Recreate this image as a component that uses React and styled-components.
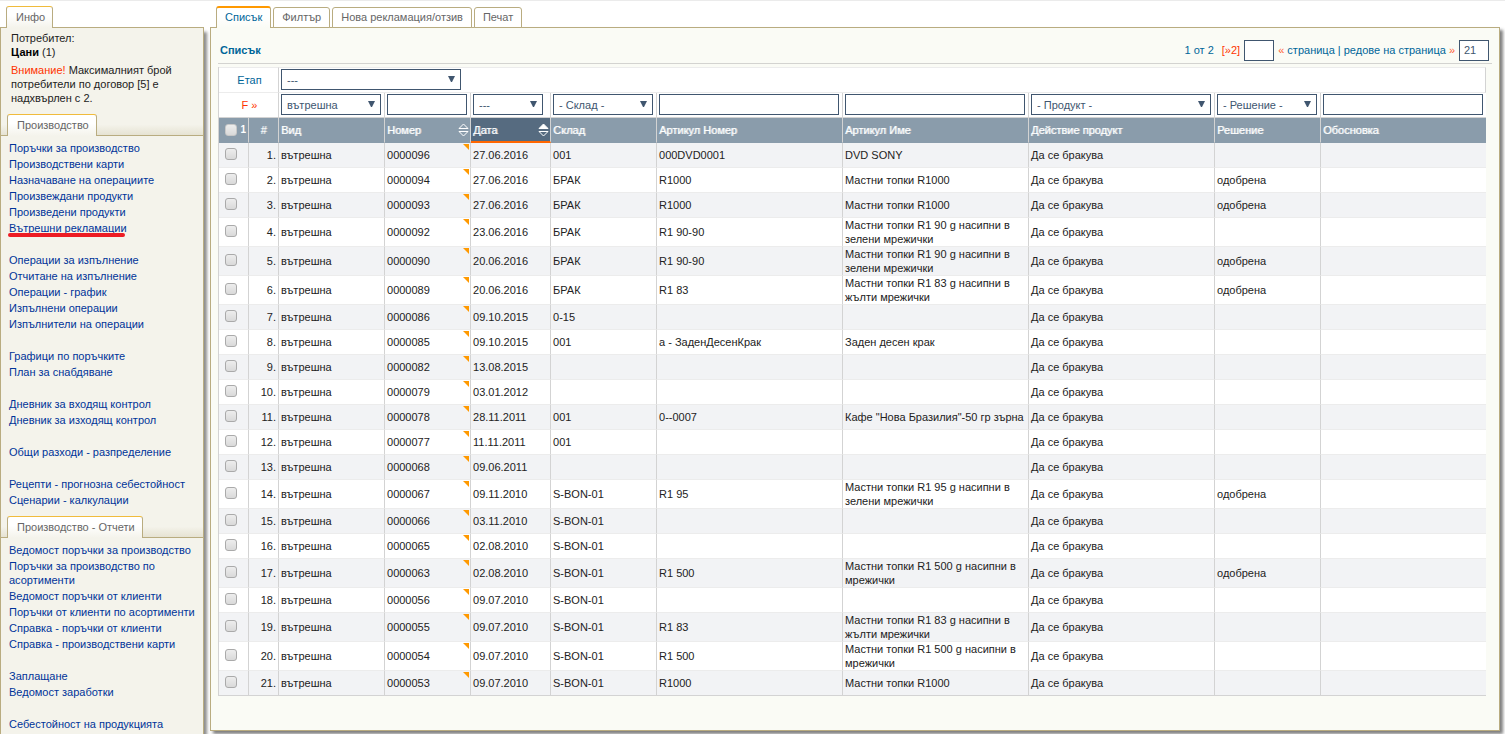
import styled, { createGlobalStyle, css } from "styled-components"

const menuProizvodstvo = [
    "Поръчки за производство",
    "Производствени карти",
    "Назначаване на операциите",
    "Произвеждани продукти",
    "Произведени продукти",
    "Вътрешни рекламации",
    "",
    "Операции за изпълнение",
    "Отчитане на изпълнение",
    "Операции - график",
    "Изпълнени операции",
    "Изпълнители на операции",
    "",
    "Графици по поръчките",
    "План за снабдяване",
    "",
    "Дневник за входящ контрол",
    "Дневник за изходящ контрол",
    "",
    "Общи разходи - разпределение",
    "",
    "Рецепти - прогнозна себестойност",
    "Сценарии - калкулации",
]

const menuOtcheti = [
    "Ведомост поръчки за производство",
    "Поръчки за производство по асортименти",
    "Ведомост поръчки от клиенти",
    "Поръчки от клиенти по асортименти",
    "Справка - поръчки от клиенти",
    "Справка - производствени карти",
    "",
    "Заплащане",
    "Ведомост заработки",
    "",
    "Себестойност на продукцията",
]

const tabs = ["Списък", "Филтър", "Нова рекламация/отзив", "Печат"]

// номер, дата, склад, артикул номер, артикул име, решение
const rows = [
    ["0000096", "27.06.2016", "001", "000DVD0001", "DVD SONY", ""],
    ["0000094", "27.06.2016", "БРАК", "R1000", "Мастни топки R1000", "одобрена"],
    ["0000093", "27.06.2016", "БРАК", "R1000", "Мастни топки R1000", "одобрена"],
    ["0000092", "23.06.2016", "БРАК", "R1 90-90", "Мастни топки R1 90 g насипни в зелени мрежички", ""],
    ["0000090", "20.06.2016", "БРАК", "R1 90-90", "Мастни топки R1 90 g насипни в зелени мрежички", "одобрена"],
    ["0000089", "20.06.2016", "БРАК", "R1 83", "Мастни топки R1 83 g насипни в жълти мрежички", "одобрена"],
    ["0000086", "09.10.2015", "0-15", "", "", ""],
    ["0000085", "09.10.2015", "001", "a - ЗаденДесенКрак", "Заден десен крак", ""],
    ["0000082", "13.08.2015", "", "", "", ""],
    ["0000079", "03.01.2012", "", "", "", ""],
    ["0000078", "28.11.2011", "001", "0--0007", "Кафе \"Нова Бразилия\"-50 гр зърна", ""],
    ["0000077", "11.11.2011", "001", "", "", ""],
    ["0000068", "09.06.2011", "", "", "", ""],
    ["0000067", "09.11.2010", "S-BON-01", "R1 95", "Мастни топки R1 95 g насипни в зелени мрежички", "одобрена"],
    ["0000066", "03.11.2010", "S-BON-01", "", "", ""],
    ["0000065", "02.08.2010", "S-BON-01", "", "", ""],
    ["0000063", "02.08.2010", "S-BON-01", "R1 500", "Мастни топки R1 500 g насипни в мрежички", "одобрена"],
    ["0000056", "09.07.2010", "S-BON-01", "", "", ""],
    ["0000055", "09.07.2010", "S-BON-01", "R1 83", "Мастни топки R1 83 g насипни в жълти мрежички", ""],
    ["0000054", "09.07.2010", "S-BON-01", "R1 500", "Мастни топки R1 500 g насипни в мрежички", ""],
    ["0000053", "09.07.2010", "S-BON-01", "R1000", "Мастни топки R1000", ""],
]

export default function App(){
    return (
        <>
            <GlobalStyle />
            <Page>
                <Sidebar />
                <Content />
            </Page>
        </>
    )
}

function Sidebar(){
    return (
        <StyleSidebar>
            <SideTabs $first><SideTab>Инфо</SideTab></SideTabs>
            <SideBody>
                <Info>
                    <p>Потребител:<br /><b>Цани</b> (1)</p>
                    <p><Warning>Внимание!</Warning> Максималният брой потребители по договор [5] е надхвърлен с 2.</p>
                </Info>
                <SideTabs><SideTab>Производство</SideTab></SideTabs>
                <Menu items={menuProizvodstvo} marked="Вътрешни рекламации" />
                <SideTabs><SideTab>Производство - Отчети</SideTab></SideTabs>
                <Menu items={menuOtcheti} />
            </SideBody>
        </StyleSidebar>
    )
}

function Menu({ items, marked }){
    return (
        <MenuList>
            {items.map((item, i) => (
                <li key={i}>
                    {item && <MenuLink href="#">{item}{item === marked && <RedLine />}</MenuLink>}
                </li>
            ))}
        </MenuList>
    )
}

function RedLine(){
    return (
        <StyleRedLine width="118" height="6" viewBox="0 0 118 6" aria-hidden="true">
            <path d="M2 3 H115" fill="none" stroke="#ed1c24" strokeWidth="4" strokeLinecap="round" />
        </StyleRedLine>
    )
}

function SelectBox({ label, value, width }){
    return (
        <StyleSelectBox $width={width}>
            <select aria-label={label} defaultValue={value}>
                <option>{value}</option>
            </select>
            <svg width="7" height="7" viewBox="0 0 7 7" aria-hidden="true"><path d="M0 0H7L4 6H3Z" fill="#40566f" /></svg>
        </StyleSelectBox>
    )
}

function SortIcon({ active }){
    return (
        <StyleSortIcon width="11" height="14" viewBox="0 0 11 14" aria-hidden="true">
            <path d="M1 5.5 L5.5 1 L10 5.5 Z" fill={active ? "#fff" : "none"} stroke="#fff" strokeWidth="1" />
            <path d="M1 8.5 L5.5 13 L10 8.5 Z" fill="none" stroke="#fff" strokeWidth="1" />
        </StyleSortIcon>
    )
}

function Content(){
    return (
        <StyleContent>
            <Tabs>
                {tabs.map((tab, i) => <Tab key={tab} type="button" $active={i === 0}>{tab}</Tab>)}
            </Tabs>
            <Panel>
                <TitleBar>
                    <h1>Списък</h1>
                    <Pager>
                        <span>1 от 2</span>
                        <PageLink href="#">[»2]</PageLink>
                        <TextInput $width={30} aria-label="страница" />
                        <label htmlFor="rowsPerPage"><i>«</i> страница | редове на страница <i>»</i></label>
                        <TextInput $width={30} id="rowsPerPage" defaultValue="21" />
                    </Pager>
                </TitleBar>
                <Grid />
            </Panel>
        </StyleContent>
    )
}

function Grid(){
    return (
        <Table>
            <colgroup>
                <Col $w={30} />
                <Col $w={30} />
                <Col $w={106} />
                <Col $w={86} />
                <Col $w={80} />
                <Col $w={106} />
                <Col $w={186} />
                <Col $w={186} />
                <Col $w={186} />
                <Col $w={106} />
                <col />
            </colgroup>
            <thead>
                <StageRow>
                    <td colSpan={2}>Етап</td>
                    <td colSpan={9}><SelectBox label="Етап" value="---" width={180} /></td>
                </StageRow>
                <FilterRow>
                    <td colSpan={2}><FilterLink href="#">F »</FilterLink></td>
                    <td><SelectBox label="Вид" value="вътрешна" width={100} /></td>
                    <td><TextInput $width={80} aria-label="Номер" /></td>
                    <td><SelectBox label="Дата" value="---" width={70} /></td>
                    <td><SelectBox label="Склад" value="- Склад -" width={100} /></td>
                    <td><TextInput $width={180} aria-label="Артикул Номер" /></td>
                    <td><TextInput $width={180} aria-label="Артикул Име" /></td>
                    <td><SelectBox label="Действие продукт" value="- Продукт -" width={180} /></td>
                    <td><SelectBox label="Решение" value="- Решение -" width={100} /></td>
                    <td><TextInput $width={160} aria-label="Обосновка" /></td>
                </FilterRow>
                <HeadRow>
                    <th><CheckAll><Check $head type="checkbox" aria-label="Всички" /><b>1</b></CheckAll></th>
                    <HeadNumber>#</HeadNumber>
                    <th>Вид</th>
                    <th><HeadLabel>Номер<SortIcon /></HeadLabel></th>
                    <SortedHead><HeadLabel>Дата<SortIcon active /></HeadLabel></SortedHead>
                    <th>Склад</th>
                    <th>Артикул Номер</th>
                    <th>Артикул Име</th>
                    <th>Действие продукт</th>
                    <th>Решение</th>
                    <th>Обосновка</th>
                </HeadRow>
            </thead>
            <tbody>
                {rows.map(([nomer, data, sklad, artikul, ime, reshenie], i) => (
                    <Row key={nomer}>
                        <CheckCell><Check type="checkbox" aria-label={`Избор ${nomer}`} /></CheckCell>
                        <NumberCell>{i + 1}.</NumberCell>
                        <td>вътрешна</td>
                        <MarkedCell>{nomer}</MarkedCell>
                        <td>{data}</td>
                        <td>{sklad}</td>
                        <td>{artikul}</td>
                        <td>{ime}</td>
                        <td>Да се бракува</td>
                        <td>{reshenie}</td>
                        <td></td>
                    </Row>
                ))}
            </tbody>
        </Table>
    )
}


const GlobalStyle = createGlobalStyle`
    * {
        box-sizing: border-box;
    }

    body {
        margin: 0;
        background: #fff;
        color: #222;
        font: 11px/14px "Liberation Sans", Arial, sans-serif;
    }

    a {
        text-decoration: none;
    }

    input, select, button {
        margin: 0;
        font: inherit;
    }
`

const Page = styled.div`
    display: flex;
    gap: 6px;
    min-height: 100vh;
    padding-right: 5px;
    border-top: 1px solid #ebebeb;
`

const StyleSidebar = styled.aside`
    display: flex;
    flex-direction: column;
    flex: 0 0 204px;
    padding-top: 5px;
`

const SideBody = styled.div`
    flex: 1;
    border: 1px solid #b9ac80;
    border-width: 0 1px;
    background: #f4f3eb;
    box-shadow: 3px 4px 3px rgba(0, 0, 0, 0.45);
`

const SideTabs = styled.div`
    display: flex;
    padding-left: 6px;
    border-bottom: 1px solid #b9ac80;
    background: ${({ $first }) => $first ? "none" : "linear-gradient(#f4f3eb 50%, #e6e3d3)"};
`

const SideTab = styled.h2`
    height: 22px;
    margin: 0 0 -1px;
    padding: 3px 7px 4px 9px;
    border: 1px solid #b9ac80;
    border-top-color: #f0bb3c;
    border-bottom: 0;
    border-radius: 3px 3px 0 0;
    background: linear-gradient(#fff 40%, #f4f3eb);
    color: #666;
    font-size: 11px;
    font-weight: normal;
`

const Info = styled.div`
    padding: 3px 10px 5px;

    p {
        margin: 0 0 4px;
    }

    b {
        color: #000;
    }
`

const Warning = styled.span`
    color: #f30;
`

const MenuList = styled.ul`
    margin: 0;
    padding: 4px 6px 8px 8px;
    list-style: none;

    li {
        min-height: 16px;
        padding: 1px 0;
    }
`

const MenuLink = styled.a`
    position: relative;
    color: #039;
`

const StyleRedLine = styled.svg`
    position: absolute;
    left: -1px;
    top: 10px;
`

const StyleContent = styled.main`
    flex: 1;
    min-width: 0;
    padding-top: 5px;
`

const Tabs = styled.nav`
    display: flex;
    align-items: flex-end;
    gap: 2px;
    margin-bottom: -1px;
    padding-left: 6px;
`

const Tab = styled.button`
    position: relative;
    height: 21px;
    padding: 0 8px 2px;
    border: 1px solid #b9ac80;
    border-radius: 3px 3px 0 0;
    background: #fff;
    color: #666;
    line-height: 14px;

    ${({ $active }) => $active && css`
        height: 22px;
        border-top: 2px solid #f90;
        border-bottom: 0;
        background: linear-gradient(#fff 40%, #fafbf5);
        color: #069;
    `}
`

const Panel = styled.section`
    padding: 0 7px 34px;
    border: 1px solid #b9ac80;
    background: #fafbf5;
    box-shadow: 3px 3px 3px rgba(0, 0, 0, 0.5);
`

const TitleBar = styled.header`
    display: flex;
    justify-content: space-between;
    align-items: center;
    height: 36px;
    margin-bottom: 3px;
    padding: 9px 3px 0 2px;
    border-bottom: 1px solid #d3d3d0;
    color: #069;

    h1 {
        margin: 0;
        font-size: 11px;
    }
`

const Pager = styled.div`
    display: flex;
    align-items: center;
    gap: 4px;

    i {
        color: #ff5c33;
        font-style: normal;
    }
`

const PageLink = styled.a`
    margin-left: 4px;
    color: #f30;
`

const FilterLink = styled.a`
    color: #f30;
`

const TextInput = styled.input`
    display: block;
    width: ${({ $width }) => $width}px;
    height: 21px;
    padding: 0 4px;
    border: 1px solid #40566f;
    border-radius: 0;
    background: #fff;
    color: #40566f;
`

const StyleSelectBox = styled.div`
    position: relative;
    width: ${({ $width }) => $width}px;

    select {
        display: block;
        width: 100%;
        height: 21px;
        padding: 0 5px;
        border: 1px solid #40566f;
        border-radius: 0;
        appearance: none;
        background: #fff;
        color: #40566f;
    }

    svg {
        position: absolute;
        top: 7px;
        right: 6px;
        pointer-events: none;
    }
`

const Table = styled.table`
    width: calc(100% - 6px);
    table-layout: fixed;
    border-spacing: 0;
    border-left: 1px solid #d3d3d3;
    background: #fff;

    td, th {
        padding: 0 0 0 2px;
        border-right: 1px solid #d3d3d3;
    }
`

const Col = styled.col`
    width: ${({ $w }) => $w}px;
`

const StageRow = styled.tr`
    height: 26px;
    color: #069;

    td {
        padding-bottom: 1px;
        border-top: 1px solid #ececec;
        border-bottom: 1px solid #ececec;
    }

    td:first-child {
        text-align: center;
    }
`

const FilterRow = styled.tr`
    height: 25px;

    td {
        padding-bottom: 1px;
        border-bottom: 1px solid #d3d3d3;
    }

    td:first-child {
        text-align: center;
    }

    td:last-child {
        border-right: 0;
    }
`

const HeadRow = styled.tr`
    height: 25px;

    th {
        border-bottom: 1px solid #8a9cab;
        background: #8a9cab;
        color: #fff;
        font-weight: normal;
        text-align: left;
        text-shadow: 1px 0 rgba(255, 255, 255, 0.6);
    }

    th:last-child {
        border-right: 0;
    }
`

const HeadNumber = styled.th`
    && {
        padding: 0;
        text-align: center;
    }
`

const SortedHead = styled.th`
    && {
        border-bottom: 2px solid #f60;
        background: #566b80;
    }
`

const HeadLabel = styled.div`
    display: flex;
    justify-content: space-between;
    align-items: center;
    padding-right: 1px;
`

const StyleSortIcon = styled.svg`
    flex: none;
`

const CheckAll = styled.div`
    display: flex;
    justify-content: space-between;
    padding: 0 2px 0 4px;

    b {
        font-size: 10px;
        line-height: 12px;
        text-shadow: none;
    }
`

const Check = styled.input`
    display: block;
    width: 12px;
    height: 12px;
    border: 1px solid ${({ $head }) => $head ? "#c8c8c8" : "#aaa"};
    border-radius: 3px;
    appearance: none;
    background: linear-gradient(#ededed, #d9d9d9);
`

const Row = styled.tr`
    height: 25px;

    &:nth-child(odd) {
        background: #f2f3f5;
    }

    td {
        border-bottom: 1px solid #ececec;
    }

    td:last-child {
        border-right: 0;
    }

    &:last-child td {
        border-bottom-color: #d3d3d3;
    }
`

const CheckCell = styled.td`
    && {
        padding: 0 0 2px 6px;
    }
`

const NumberCell = styled.td`
    && {
        padding-right: 2px;
        text-align: right;
    }
`

// оранжево ъгълче горе вдясно
const MarkedCell = styled.td`
    position: relative;

    &::after {
        content: "";
        position: absolute;
        top: 1px;
        right: 1px;
        border-top: 6px solid #f90;
        border-left: 6px solid transparent;
    }
`
